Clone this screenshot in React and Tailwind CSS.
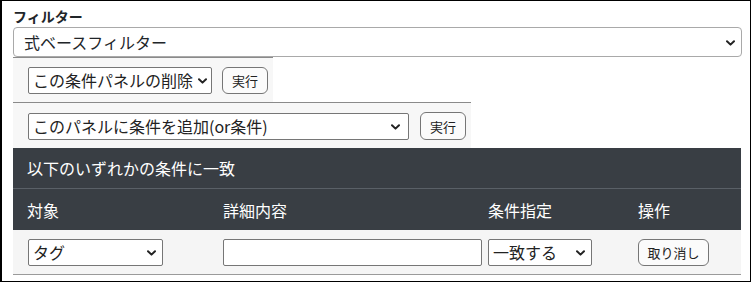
import React from "react";

const font = { fontFamily: '"Noto Sans CJK JP", "Noto Sans", sans-serif' };

function Chevron({ className }) {
  return (
    <svg className={className} width="9" height="6" viewBox="0 0 9 6" fill="none">
      <path d="M1 1.2 L4.5 4.6 L8 1.2" stroke="#222" strokeWidth="2" strokeLinecap="round" strokeLinejoin="round" />
    </svg>
  );
}

function SmallSelect({ value, w, chev }) {
  return (
    <div className={`relative ${w} h-[27px] shrink-0`}>
      <select
        defaultValue={value}
        className="appearance-none w-full h-full border border-[#767676] rounded-[2px] bg-white pl-[4px] pr-[14px] text-[16px] leading-[25px] text-[#222] outline-none"
        style={font}
      >
        <option>{value}</option>
      </select>
      <Chevron className={`absolute top-[11px] ${chev} pointer-events-none`} />
    </div>
  );
}

function Btn({ children, w, h }) {
  return (
    <button
      className={`${w} ${h} shrink-0 border border-[#767676] rounded-[6px] bg-[#fbfbfb] text-[13px] leading-none text-[#222] flex items-center justify-center`}
      style={font}
    >
      {children}
    </button>
  );
}

export default function App() {
  return (
    <div
      className="w-[751px] h-[282px] border border-black border-l-2 bg-white pl-[11px] pr-[8px] pt-[4px] text-[#212529] box-border"
      style={font}
    >
      <div className="text-[14px] font-bold leading-[22px] h-[22px]">フィルター</div>
      <div className="relative h-[30px]">
        <select
          defaultValue="式ベースフィルター"
          className="appearance-none w-full h-full border border-[#a9a9a9] rounded-[4px] bg-white pl-[10px] text-[16px] leading-[28px] text-[#212529] outline-none"
          style={font}
        >
          <option>式ベースフィルター</option>
        </select>
        <Chevron className="absolute right-[7px] top-[13px] pointer-events-none" />
      </div>

      <div className="w-[260px] h-[45px] border-t border-[#8a8a8a] bg-[#f7f7f7] flex items-center gap-[10px] pl-[15px] pt-[1px]">
        <SmallSelect value="この条件パネルの削除" w="w-[184px]" chev="right-[5px]" />
        <Btn w="w-[46px]" h="h-[27px]">実行</Btn>
      </div>

      <div className="w-[458px] h-[46px] border-t border-[#8a8a8a] bg-[#f7f7f7] flex items-center gap-[11px] pl-[15px] pt-[1px]">
        <SmallSelect value="このパネルに条件を追加(or条件)" w="w-[381px]" chev="right-[9px]" />
        <Btn w="w-[46px]" h="h-[28px]">実行</Btn>
      </div>

      <div className="w-[728px]">
        <div className="h-[41px] bg-[#393e44] border-b border-[#5a6067] text-white text-[16px] flex items-center pl-[14px]">
          以下のいずれかの条件に一致
        </div>
        <div className="h-[41px] bg-[#393e44] text-white text-[16px] grid grid-cols-[196px_265px_150px_1fr] items-center">
          <div className="pl-[14px]">対象</div>
          <div className="pl-[14px]">詳細内容</div>
          <div className="pl-[14px]">条件指定</div>
          <div className="pl-[14px]">操作</div>
        </div>
        <div className="h-[45px] bg-[#f5f5f5] border-b border-[#9a9a9a] grid grid-cols-[196px_265px_150px_1fr] items-center">
          <div className="pl-[15px]">
            <SmallSelect value="タグ" w="w-[135px]" chev="right-[7px]" />
          </div>
          <div className="pl-[14px]">
            <input className="w-[259px] h-[27px] border border-[#767676] rounded-[2px] bg-white outline-none" />
          </div>
          <div className="pl-[14px]">
            <SmallSelect value="一致する" w="w-[104px]" chev="right-[7px]" />
          </div>
          <div className="pl-[14px]">
            <Btn w="w-[71px]" h="h-[27px]">取り消し</Btn>
          </div>
        </div>
      </div>
    </div>
  );
}
